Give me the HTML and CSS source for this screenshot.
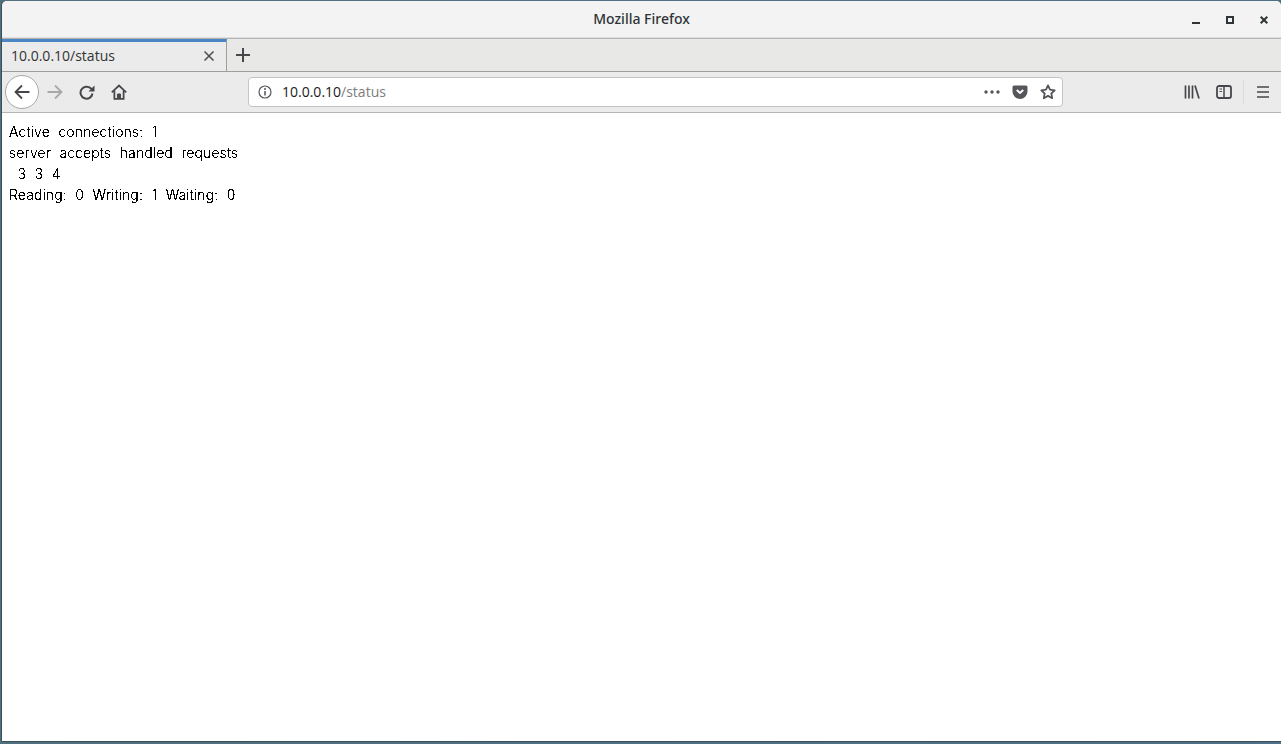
FILE: index.html
```html
<!DOCTYPE html>
<html lang="en">
<head>
<meta charset="utf-8">
<title>Mozilla Firefox</title>
<link rel="stylesheet" href="styles.css">
</head>
<body>
<svg class="defs" aria-hidden="true"><filter id="alias" x="0" y="0" width="100%" height="100%" color-interpolation-filters="sRGB"><feComponentTransfer><feFuncA type="discrete" tableValues="0 0 1 1 1"/></feComponentTransfer></filter></svg>
<div class="window">
  <header class="titlebar">
    <div class="title">Mozilla Firefox</div>
    <div class="wm-controls">
      <svg class="wm" viewBox="0 0 16 16"><path d="M4 11h8" stroke="#2e3436" stroke-width="2" fill="none"/></svg>
      <svg class="wm" viewBox="0 0 16 16"><rect x="5" y="5" width="6" height="6" stroke="#2e3436" stroke-width="2" fill="none"/></svg>
      <svg class="wm" viewBox="0 0 16 16"><path d="M4.7 4.7l6.6 6.6M11.3 4.7l-6.6 6.6" stroke="#2e3436" stroke-width="2" fill="none"/></svg>
    </div>
  </header>
  <div class="tabstrip">
    <div class="tab">
      <span class="tab-label">10.0.0.10/status</span>
      <svg class="tab-close" viewBox="0 0 10 10"><path d="M.5.5l9 9M9.5.5l-9 9" stroke="#4a4a4f" stroke-width="1.5" fill="none"/></svg>
    </div>
    <div class="newtab">
      <svg class="plus" viewBox="0 0 14 14"><path d="M7 0v14M0 7h14" stroke="#47474b" stroke-width="2" fill="none"/></svg>
    </div>
  </div>
  <nav class="toolbar">
    <div class="backbtn">
      <svg class="icon" viewBox="0 0 16 16"><path d="M15.5 8H1.5M8 1.5L1.5 8 8 14.5" stroke="#47474b" stroke-width="1.8" fill="none"/></svg>
    </div>
    <svg class="icon fwd" viewBox="0 0 16 16"><path d="M.5 8h14M8 1.5L14.5 8 8 14.5" stroke="#a9a9ab" stroke-width="1.8" fill="none"/></svg>
    <svg class="icon reload" viewBox="0 0 16 16"><path d="M13.5 9.5a6 6 0 1 1-1.8-5.2L14 6" stroke="#47474b" stroke-width="2" fill="none"/><path d="M15.5 1.5v6h-6z" fill="#47474b"/></svg>
    <svg class="icon home" viewBox="0 0 16 16"><path d="M.8 8.3L8 1.5l7.2 6.8" stroke="#47474b" stroke-width="1.8" fill="none"/><path d="M3.4 6.8v8h9.2v-8" stroke="#47474b" stroke-width="1.8" fill="none"/><rect x="6" y="9.5" width="4" height="5" rx="1" fill="#47474b"/></svg>
    <div class="urlbar">
      <svg class="info" viewBox="0 0 14 14"><circle cx="7" cy="7" r="6" stroke="#55555a" stroke-width="1.2" fill="none"/><path d="M7 6v4.5" stroke="#55555a" stroke-width="1.5"/><circle cx="7" cy="3.9" r="1" fill="#55555a"/></svg>
      <span class="url"><span class="host">10.0.0.10</span><span class="path">/status</span></span>
      <svg class="dots" viewBox="0 0 16 4"><circle cx="2" cy="2" r="1.7"/><circle cx="8" cy="2" r="1.7"/><circle cx="14" cy="2" r="1.7"/></svg>
      <svg class="pocket" viewBox="0 0 16 16"><path d="M2 1.5h12a1.5 1.5 0 0 1 1.5 1.5v4.5a7.5 7.5 0 0 1-15 0V3A1.5 1.5 0 0 1 2 1.5z" fill="#55555a"/><path d="M4.8 6L8 9l3.2-3" stroke="#fff" stroke-width="2" fill="none"/></svg>
      <svg class="star" viewBox="0 0 16 16"><path d="M8 1.4l2 4.3 4.7.6-3.4 3.2.9 4.7L8 11.9l-4.2 2.3.9-4.7L1.3 6.3 6 5.7z" stroke="#55555a" stroke-width="1.8" stroke-linejoin="round" fill="none"/></svg>
    </div>
    <div class="tools">
      <svg class="icon" viewBox="0 0 16 16"><path d="M1.5 1.5v13M5 1.5v13M8.5 1.5v13M11 1.5l4 13" stroke="#47474b" stroke-width="1.7" fill="none"/></svg>
      <svg class="icon sidebar" viewBox="0 0 16 16"><rect x="1" y="2" width="14" height="12" rx="2" stroke="#47474b" stroke-width="1.8" fill="none"/><path d="M8 2v12" stroke="#47474b" stroke-width="1.5"/><path d="M3.5 5h2.5M3.5 7.5h2.5" stroke="#47474b" stroke-width="1"/></svg>
      <div class="sep"></div>
      <svg class="icon menu" viewBox="0 0 16 16"><path d="M2 3h12M2 8h12M2 13h12" stroke="#47474b" stroke-width="1.7" fill="none"/></svg>
    </div>
  </nav>
  <main class="content"><pre class="status">Active connections: 1 
server accepts handled requests
 3 3 4 
Reading: 0 Writing: 1 Waiting: 0 </pre></main>
</div>
</body>
</html>
```
FILE: styles.css
```css
* { box-sizing: border-box; }
html, body { height: 100%; }
body {
  margin: 0;
  background: linear-gradient(90deg, #51707f, #4e7088);
  overflow: hidden;
}
.defs { display: block; width: 0; height: 0; overflow: hidden; }
.window {
  height: 740px;
  margin: 1px 0 0 2px;
  display: flex;
  flex-direction: column;
  background: #fff;
  border-radius: 5px 5px 0 0;
  box-shadow: 0 1px 0 #3d4f58, -1px 0 0 #3d4f58;
  overflow: hidden;
}
.titlebar {
  flex: 0 0 38px;
  background: #f3f3f3;
  border-bottom: 1px solid #b5b5b3;
  position: relative;
  display: flex;
  align-items: center;
  justify-content: center;
  box-shadow: inset 0 -1px 0 #dedede;
}
.title {
  font: 500 14px "Noto Sans", "Open Sans", sans-serif;
  color: #2e3436;
  margin-bottom: 2px;
}
.wm-controls {
  position: absolute;
  right: 9px;
  top: 11px;
  display: flex;
  gap: 18px;
}
.wm { width: 16px; height: 16px; }
.tabstrip {
  flex: 0 0 32px;
  display: flex;
  background: #e8e8e7;
  border-bottom: 1px solid #9d9d9d;
}
.tab {
  width: 225px;
  height: 32px;
  background: #ebebeb;
  border-top: 3px solid #4a86c5;
  border-right: 1px solid #9d9d9d;
  display: flex;
  align-items: center;
  padding: 0 12px 2px 9px;
}
.tab-label {
  flex: 1;
  font: 14px "Open Sans", "Noto Sans", sans-serif;
  color: #333;
}
.tab-close { width: 10px; height: 10px; }
.newtab {
  width: 32px;
  display: flex;
  align-items: center;
  justify-content: center;
}
.plus { width: 14px; height: 14px; }
.toolbar {
  flex: 0 0 41px;
  background: #ebebeb;
  border-bottom: 1px solid #b4b4b4;
  display: flex;
  align-items: center;
}
.icon { width: 16px; height: 16px; flex: none; }
.backbtn {
  width: 34px;
  height: 34px;
  margin-left: 3px;
  border-radius: 50%;
  background: #fff;
  border: 1px solid #a8a8a8;
  display: flex;
  align-items: center;
  justify-content: center;
}
.fwd { margin-left: 8px; }
.reload { margin-left: 16px; }
.home { margin-left: 16px; }
.urlbar {
  width: 815px;
  height: 30px;
  margin-left: 121px;
  background: #fff;
  border: 1px solid #c4c4c4;
  border-radius: 4px;
  display: flex;
  align-items: center;
  padding: 0 6px 0 9px;
}
.info { width: 14px; height: 14px; flex: none; }
.url {
  flex: 1;
  margin: 0 0 1px 10px;
  font: 14px "Open Sans", "Noto Sans", sans-serif;
}
.host { color: #1a1a1a; }
.path { color: #7d7d7d; }
.dots { width: 16px; height: 4px; fill: #55555a; flex: none; }
.pocket { width: 16px; height: 16px; flex: none; margin-left: 12px; }
.star { width: 16px; height: 16px; flex: none; margin-left: 12px; }
.tools {
  display: flex;
  align-items: center;
  margin-left: 121px;
}
.sidebar { margin-left: 16px; }
.sep { width: 1px; height: 24px; background: #dcdcdc; margin-left: 11px; }
.menu { margin-left: 11px; }
.content {
  flex: 1;
  background: #fff;
  padding: 8px 0 0 7px;
}
.status {
  margin: 0;
  font: 300 14px/21px Inter, "Liberation Sans", sans-serif;
  word-spacing: 4.5px;
  letter-spacing: 0.1px;
  color: #000;
  filter: url(#alias);
}
```
